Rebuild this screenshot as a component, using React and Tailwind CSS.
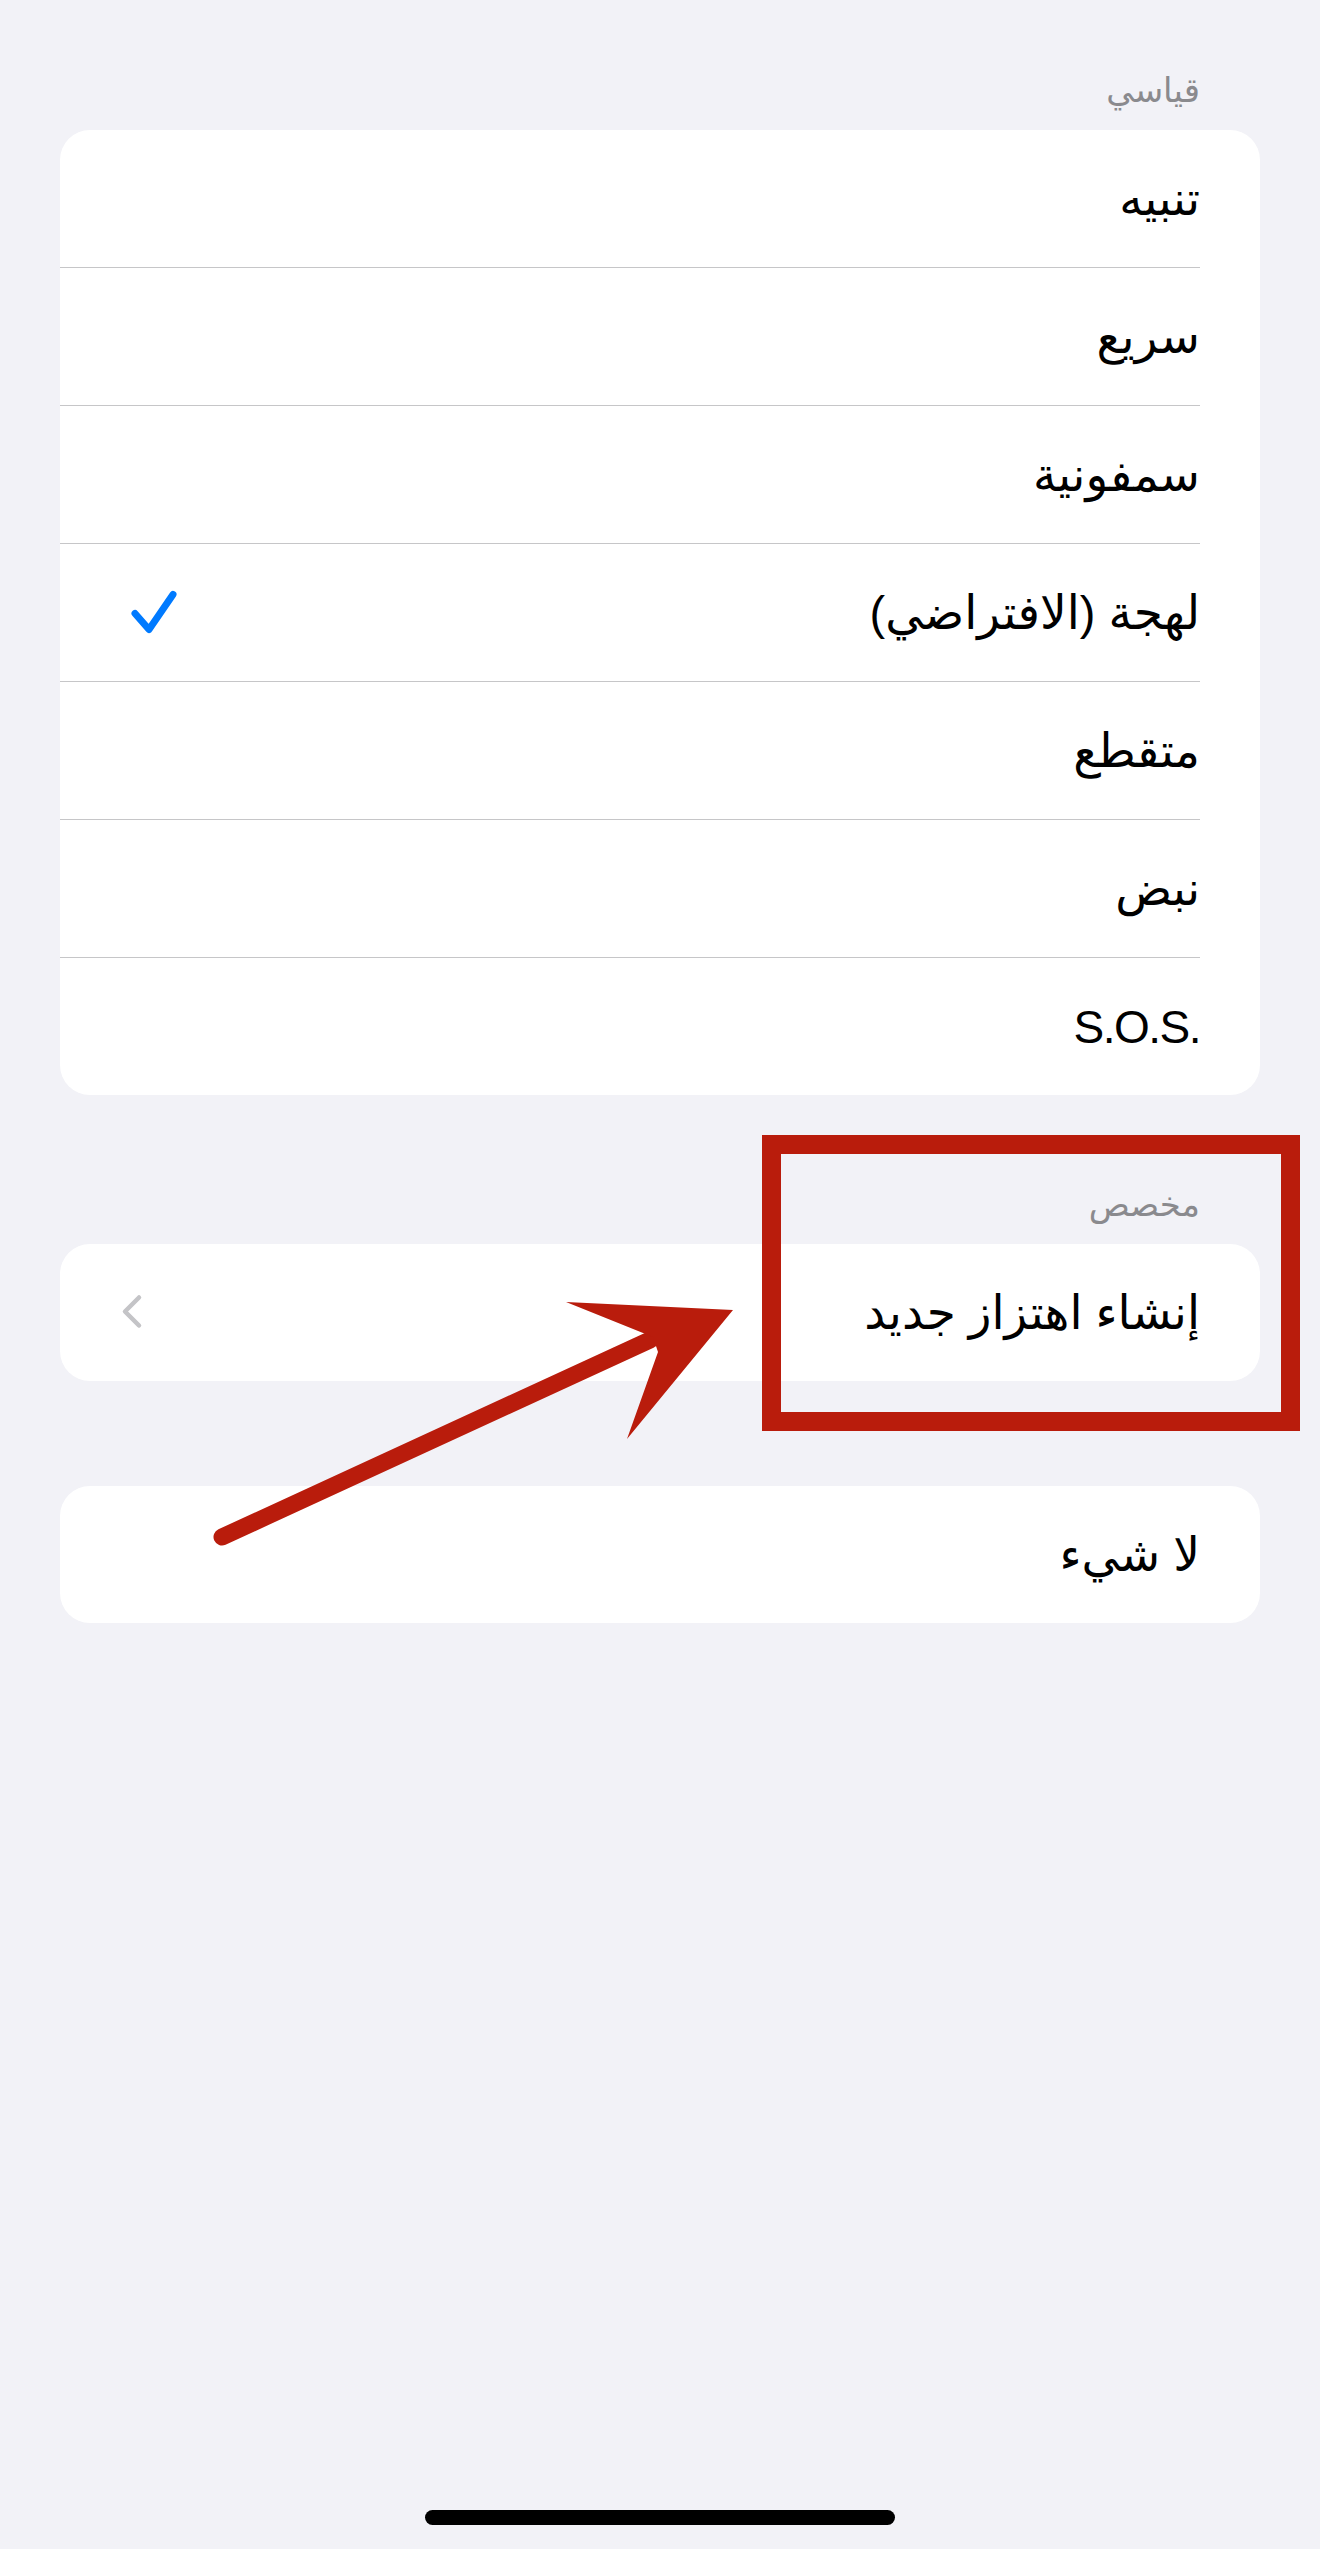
import React from "react";

const standard = ["تنبيه", "سريع", "سمفونية", "لهجة (الافتراضي)", "متقطع", "نبض", "S.O.S."];
const selected = "لهجة (الافتراضي)";

const font = { fontFamily: '"Liberation Sans", "DejaVu Sans", sans-serif' };

const Check = () => (
  <svg width="60" height="60" viewBox="0 0 60 60" aria-hidden>
    <path d="M15 30.5 L29 46.5 L53 11.5" fill="none" stroke="#007aff" strokeWidth="7" strokeLinecap="round" strokeLinejoin="round" />
  </svg>
);

const Chevron = () => (
  <svg width="40" height="60" viewBox="0 0 40 60" aria-hidden>
    <path d="M19 14.5 L5 28.5 L19 42.5" fill="none" stroke="#c4c4c7" strokeWidth="4.5" strokeLinecap="round" strokeLinejoin="round" />
  </svg>
);

const Row = ({ label, right }) => (
  <div className="flex h-[137px] items-center justify-between pr-[60px] pl-[60px]">
    {label === "S.O.S." ? (
      <span dir="ltr" className="text-[46px] leading-none tracking-[-1.5px] text-black">
        {label}
      </span>
    ) : (
      <span className="text-[47px] leading-none text-black">{label}</span>
    )}
    {right}
  </div>
);

const Header = ({ children }) => (
  <div className="mb-[16px] pr-[120px] text-[34px] leading-[48px] text-[#8a8a8e]">{children}</div>
);

const Card = ({ children }) => <div className="mx-[60px] overflow-hidden rounded-[30px] bg-white">{children}</div>;

export default function App() {
  return (
    <div dir="rtl" style={font} className="relative flex min-h-[2549px] w-[1320px] flex-col bg-[#f2f2f7] pt-[66px]">
      <Header>قياسي</Header>
      <Card>
        {standard.map((item, i) => (
          <div key={item}>
            <Row label={item} right={item === selected ? <Check /> : null} />
            {i < standard.length - 1 ? <div className="mr-[60px] h-px bg-[#c6c6c8]" /> : null}
          </div>
        ))}
      </Card>

      <div className="mt-[85px]">
        <Header>مخصص</Header>
        <Card>
          <Row label="إنشاء اهتزاز جديد" right={<Chevron />} />
        </Card>
      </div>

      <div className="mt-[105px]">
        <Card>
          <Row label="لا شيء" />
        </Card>
      </div>

      <div className="mx-auto mt-auto mb-[24px] h-[15px] w-[470px] rounded-full bg-black" />

      {/* annotation drawn on top of the screenshot */}
      <svg
        className="pointer-events-none absolute top-0 left-0"
        width="1320"
        height="2549"
        viewBox="0 0 1320 2549"
        aria-hidden
      >
        <rect x="771.5" y="1144.5" width="519" height="277" fill="none" stroke="#b91c0c" strokeWidth="19" />
        <line x1="222" y1="1537" x2="650" y2="1340" stroke="#b91c0c" strokeWidth="17" strokeLinecap="round" />
        <polygon points="566,1302 733,1310 627,1439 658,1352 653,1337" fill="#b91c0c" />
      </svg>
    </div>
  );
}
